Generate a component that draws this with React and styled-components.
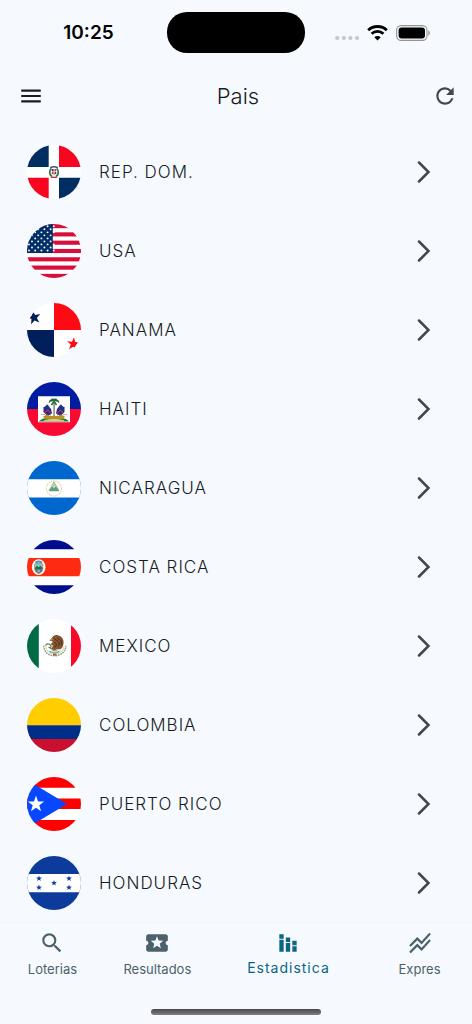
import React from 'react';
import styled, { createGlobalStyle } from 'styled-components';
import {
  MdMenu,
  MdRefresh,
  MdSearch,
  MdLocalActivity,
  MdStackedBarChart,
  MdStackedLineChart
} from 'react-icons/md';

const GlobalStyle = createGlobalStyle`
  * {
    box-sizing: border-box;
  }

  body {
    margin: 0;
    background-color: #f6fafe;
    color: #171c1f;
    font-family: Inter, "Liberation Sans", sans-serif;
  }
`;

const Screen = styled.div`
  display: flex;
  flex-direction: column;
  min-height: 100vh;
`;

const StatusBar = styled.div`
  display: grid;
  grid-template-columns: 1fr 138px 1fr;
  align-items: center;
  height: 65px;
  flex-shrink: 0;
`;

const Clock = styled.time`
  padding-left: 10px;
  text-align: center;
  font-size: 19px;
  font-weight: 600;
  line-height: 24px;
  color: #000;
`;

const Island = styled.div`
  height: 41px;
  border-radius: 20px;
  background-color: #000;
`;

const StatusIcons = styled.div`
  display: flex;
  align-items: center;
  justify-content: center;
  gap: 8px;
  padding-right: 12px;
`;

const AppBar = styled.header`
  display: grid;
  grid-template-columns: 1fr auto 1fr;
  align-items: center;
  height: 61px;
  padding: 0 14px 0 18px;
  flex-shrink: 0;
`;

const IconButton = styled.button`
  display: flex;
  justify-self: ${props => props.$side};
  padding: 0;
  border: none;
  background: none;
  color: ${props => props.$color};
  font-size: 26px;
  cursor: pointer;
`;

const Title = styled.h1`
  margin: 0;
  font-size: 22px;
  font-weight: 300;
  line-height: 32px;
`;

const CountryList = styled.ul`
  flex: 1;
  margin: 0;
  padding: 6px 0 0;
  list-style: none;
`;

const CountryButton = styled.button`
  display: flex;
  align-items: center;
  gap: 18px;
  width: 100%;
  height: 79px;
  padding: 0 41px 0 27px;
  border: none;
  background: none;
  color: inherit;
  font-family: inherit;
  font-size: 17px;
  font-weight: 300;
  letter-spacing: 1px;
  text-align: left;
  cursor: pointer;
`;

const CountryName = styled.span`
  flex: 1;
`;

const Flag = styled.svg`
  width: 54px;
  height: 54px;
  border-radius: 50%;
  flex-shrink: 0;
`;

const BottomNav = styled.nav`
  display: flex;
  padding-top: 7px;
  border-top: 1px solid #f2f6f9;
  flex-shrink: 0;
`;

const NavItem = styled.a`
  display: flex;
  flex-direction: column;
  align-items: center;
  flex: ${props => (props.$active ? 3 : 2)} 1 0;
  min-width: 0;
  color: ${props => (props.$active ? '#0b6583' : '#4c616b')};
  font-size: ${props => (props.$active ? 14 : 13)}px;
  letter-spacing: ${props => (props.$active ? '1px' : 'normal')};
  line-height: ${props => (props.$active ? 24 : 26)}px;
  text-decoration: none;

  svg {
    width: 26px;
    height: 26px;
  }
`;

const HomeArea = styled.div`
  display: flex;
  justify-content: center;
  padding: 27px 0 9px;
`;

const HomeIndicator = styled.div`
  width: 36%;
  height: 6px;
  border-radius: 3px;
  background: linear-gradient(#484848, #808080);
`;

const starPoints = (cx, cy, r, turn = 0) =>
  Array.from({ length: 10 }, (_, i) => {
    const radius = i % 2 ? r * 0.4 : r;
    const angle = ((i * 36 - 90 + turn) * Math.PI) / 180;
    return `${(cx + radius * Math.cos(angle)).toFixed(2)},${(cy + radius * Math.sin(angle)).toFixed(2)}`;
  }).join(' ');

const Dominican = () => (
  <>
    <path fill="#fff" d="M0 0h54v54H0z" />
    <path fill="#002d62" d="M0 0h21.7v22H0zM32 32.7h22V54H32z" />
    <path fill="#f8061f" d="M32 0h22v22H32zM0 32.7h21.7V54H0z" />
    <path d="M24.2 23.2c-2.4 3-1.8 7 .8 8.2" fill="none" stroke="#39764f" strokeWidth="1.8" />
    <path d="M29.8 23.2c2.4 3 1.8 7-.8 8.2" fill="none" stroke="#39764f" strokeWidth="1.8" />
    <path d="M23.2 22.6q3.8-1.6 7.6 0" fill="none" stroke="#35517c" strokeWidth="1.4" />
    <path d="M24 32q3 .8 6 0" fill="none" stroke="#c33443" strokeWidth="1.3" />
    <path d="M24.8 24h4.4v4.5L27 30.8l-2.2-2.3z" fill="#d9b7ac" />
    <path fill="#1c3568" d="M24.8 24h1.6v2h-1.6zM27.8 27.3h1.4v1.6h-1.4z" />
    <path fill="#ce2f3e" d="M27.8 24h1.4v2h-1.4zM24.8 27.3h1.6v1.6h-1.6z" />
  </>
);

const Usa = () => (
  <>
    <path fill="#fff" d="M0 0h54v54H0z" />
    {[0, 2, 4, 6, 8, 10, 12].map(i => (
      <rect key={i} y={i * 4.154} width="54" height="4.154" fill="#d80f3c" />
    ))}
    <path fill="#002f68" d="M0 0h25.8v29H0z" />
    {[0, 1, 2, 3, 4, 5, 6, 7, 8].map(row =>
      [0, 1, 2, 3, 4].map(col => (
        <circle
          key={`${row}-${col}`}
          cx={(row % 2 ? -1.2 : 2) + col * 6.2}
          cy={2.3 + row * 3.02}
          r="0.95"
          fill="#fff"
        />
      ))
    )}
  </>
);

const Panama = () => (
  <>
    <path fill="#fff" d="M0 0h54v54H0z" />
    <path fill="#ff0a12" d="M27 0h27v27H27z" />
    <path fill="#001f5b" d="M0 27h27v27H0z" />
    <polygon points={starPoints(7, 14.6, 7.2, -12)} fill="#001f5b" />
    <polygon points={starPoints(46.4, 41, 6.8, 5)} fill="#ff0a12" />
  </>
);

const Haiti = () => (
  <>
    <path fill="#001ca0" d="M0 0h54v27H0z" />
    <path fill="#f90a33" d="M0 27h54v27H0z" />
    <path fill="#fff" d="M11 14.3h32v26H11z" />
    <path d="M11.5 39.5q4-4 8-3.5h15q4-.5 8 3.5z" fill="#287a3c" />
    <path d="M17 38.3q10-3 20 0v1H17z" fill="#d9c98a" />
    <path d="M14 32.5h4M36 32.5h4" stroke="#e99aa5" strokeWidth="1.2" />
    <path d="M16.5 25l5 9M37.500 25l-5 9M19.500 22.500l4 11M34.500 22.500l-4 11" stroke="#7d6a62" strokeWidth=".7" />
    <path d="M16.5 25.500l4-3 3.500 4.500 1 4.500-4.500 2.500-4-4z" fill="#1e318e" />
    <path d="M37.500 25.500l-4-3-3.500 4.500-1 4.500 4.500 2.500 4-4z" fill="#1e318e" />
    <path d="M18 30.500l3-2.500 3 4M36 30.500l-3-2.500-3 4" fill="none" stroke="#c72f3e" strokeWidth="1.1" />
    <path d="M16 34.500l4-2 3 1.500h8l3-1.500 4 2-2 2.500H18z" fill="#b99021" />
    <path d="M26.400 21h1.300v13h-1.300z" fill="#6c7754" />
    <path
      d="M27 19.500c-2-.5-4 0-5.200 2-.1-2 .4-3.200 1.800-3.700 1-1.400 2.300-1.500 3.400-.8 1.100-.7 2.400-.6 3.400.8 1.400.5 2 1.700 1.800 3.700-1.200-2-3.200-2.500-5.200-2z"
      fill="#226b35"
    />
    <path d="M26.800 19.500L24.500 23M27.200 19.500l2.300 3.500" stroke="#226b35" strokeWidth="1.5" />
  </>
);

const Nicaragua = () => (
  <>
    <path fill="#0067ce" d="M0 0h54v54H0z" />
    <path fill="#fff" d="M0 18.3h54v18.3H0z" />
    <circle cx="27" cy="27.5" r="7.600" fill="none" stroke="#dfd2ab" strokeWidth="1.100" strokeDasharray="1.5 .8" />
    <path d="M27 20.8l5 9H22z" fill="#b6dceb" stroke="#a9a76a" strokeWidth=".8" />
    <path d="M23.500 27.500l1.700-2 1.800 2 1.800-2 1.700 2 .8 1.300h-8.600z" fill="#53a45b" />
    <path d="M22.500 29.300h9" stroke="#3488ad" strokeWidth="1" />
    <circle cx="27" cy="24.500" r=".8" fill="#e6b655" />
  </>
);

const CostaRica = () => (
  <>
    <path fill="#fff" d="M0 0h54v54H0z" />
    <path fill="#000d8c" d="M0 0h54v9.200H0zM0 45.300h54V54H0z" />
    <path fill="#ff2a12" d="M0 18h54v18.300H0z" />
    <ellipse cx="11.700" cy="27.200" rx="6.800" ry="7.900" fill="#fff" />
    <path d="M8 21.800q3.700-2.600 7.400 0l-.5 1.500q-3.200-1.500-6.400 0z" fill="#4190bd" />
    <path d="M7.200 24q4.500-2.500 9 0v4.500c0 3-2 4.500-4.500 5.500-2.500-1-4.500-2.500-4.500-5.500z" fill="#a88d49" />
    <path d="M8 24.500q3.700-1.800 7.400 0v3H8z" fill="#82c4dc" />
    <path d="M8 28l2-2.200 1.700 1.500 1.700-1.500 2 2.200v1.300H8z" fill="#25704b" />
    <path d="M8.200 29.500h7q-.3 2.300-3.500 3.400-3.200-1.100-3.500-3.400z" fill="#327cab" />
    <path d="M10.500 31H13" stroke="#fff" strokeWidth=".8" />
  </>
);

const Mexico = () => (
  <>
    <path fill="#fff" d="M0 0h54v54H0z" />
    <path fill="#006a45" d="M0 0h11.800v54H0z" />
    <path fill="#f90a24" d="M44 0h10v54H44z" />
    <path
      d="M16.800 26.500c.2 6.500 4 10 10.700 10.300 6.700-.3 11-3.800 11.500-10"
      fill="none"
      stroke="#8fa67c"
      strokeWidth="1.4"
      strokeDasharray="1.800 .7"
    />
    <path d="M18.800 27.500c.5 4.700 3.400 7.300 8.700 7.700 5.400-.4 8.800-3 9.500-7.500" fill="none" stroke="#d3c191" strokeWidth=".8" />
    <path
      d="M25 18.500q1.500-3 5-2.400c4.500.7 7 4 6.600 8-.2 2.900-1.200 5.200-3.200 6.200l-3-.2-3.300 1.500-2.600-2.200 1.500-3-2.600-1.200 2.500-2.200-1.500-1.200-2 .2z"
      fill="#85552f"
    />
    <path d="M27 19.500l5.500 4-1 4M30 18.500l4.500 3.500-.3 4M27.500 23l2 2.500-1.500 3" fill="none" stroke="#4c3220" strokeWidth="1" />
    <path d="M24 20.500l2-.8" stroke="#d0a44d" strokeWidth="1.2" />
    <path d="M18.500 26.500q2-3 4.500-.8t-.5 3l3.500 1.800" fill="none" stroke="#577f58" strokeWidth="1.2" />
    <path d="M21.500 31.500q6 3 12-.2l-2 2.500h-8z" fill="#48a6a9" />
    <path d="M26 34.500h3.500v2H26z" fill="#b84d42" />
    <path d="M24.500 30.500l3 1.500 4-1.700" fill="none" stroke="#b98a43" strokeWidth="1" />
  </>
);

const Colombia = () => (
  <>
    <path fill="#ffcd00" d="M0 0h54v27.300H0z" />
    <path fill="#002d87" d="M0 27.300h54V41H0z" />
    <path fill="#c9102f" d="M0 41h54v13H0z" />
  </>
);

const PuertoRico = () => (
  <>
    <path fill="#fff" d="M0 0h54v54H0z" />
    <path fill="#ff0000" d="M0 0h54v10.700H0zM0 21.400h54V32H0zM0 43h54v11H0z" />
    <path fill="#0647ff" d="M0 2.900L40 27 0 51.100z" />
    <polygon points={starPoints(9, 27.2, 8.6)} fill="#fff" />
  </>
);

const Honduras = () => (
  <>
    <path fill="#0c3b9b" d="M0 0h54v54H0z" />
    <path fill="#fff" d="M0 18h54v18.200H0z" />
    {[[12, 22.5], [42, 22.5], [27, 27.1], [12, 31.6], [42, 31.6]].map(([x, y]) => (
      <polygon key={`${x}-${y}`} points={starPoints(x, y, 3.1)} fill="#0c3b9b" />
    ))}
  </>
);

const countries = [
  { name: 'REP. DOM.', Artwork: Dominican },
  { name: 'USA', Artwork: Usa },
  { name: 'PANAMA', Artwork: Panama },
  { name: 'HAITI', Artwork: Haiti },
  { name: 'NICARAGUA', Artwork: Nicaragua },
  { name: 'COSTA RICA', Artwork: CostaRica },
  { name: 'MEXICO', Artwork: Mexico },
  { name: 'COLOMBIA', Artwork: Colombia },
  { name: 'PUERTO RICO', Artwork: PuertoRico },
  { name: 'HONDURAS', Artwork: Honduras }
];

const tabs = [
  { label: 'Loterias', Icon: MdSearch },
  { label: 'Resultados', Icon: MdLocalActivity },
  { label: 'Estadistica', Icon: MdStackedBarChart, active: true },
  { label: 'Expres', Icon: MdStackedLineChart }
];

const Chevron = () => (
  <svg width="14" height="22" viewBox="0 0 14 22" aria-hidden="true">
    <path d="M2 1.5L11.5 11 2 20.5" fill="none" stroke="#40484c" strokeWidth="2.5" strokeLinecap="round" />
  </svg>
);

const SignalDots = () => (
  <svg width="24" height="16" viewBox="0 0 24 16" aria-hidden="true">
    {[2.2, 8.8, 15.4, 22].map(x => (
      <circle key={x} cx={x} cy="13" r="2.1" fill="#c5c8cb" />
    ))}
  </svg>
);

const Wifi = () => (
  <svg width="21" height="16" viewBox="0 0 21 16" aria-hidden="true">
    <path d="M1.200 5.200a13.500 13.500 0 0 1 18.600 0" fill="none" stroke="#000" strokeWidth="2.900" />
    <path d="M4.600 8.700a8.600 8.600 0 0 1 11.800 0" fill="none" stroke="#000" strokeWidth="2.800" />
    <path d="M10.500 15.500l-3.200-3.300a4.600 4.600 0 0 1 6.400 0z" fill="#000" />
  </svg>
);

const Battery = () => (
  <svg width="34" height="16" viewBox="0 0 34 16" aria-hidden="true">
    <rect x=".6" y=".6" width="30.4" height="14.8" rx="4.6" fill="none" stroke="#929496" strokeWidth="1.1" />
    <rect x="2.600" y="2.5" width="26.4" height="11" rx="3" fill="#000" />
    <path d="M32.3 5.300c2 .8 2 4.600 0 5.400z" fill="#929496" />
  </svg>
);

const App = () => {
  const renderCountries = countries.map(({ name, Artwork }) => (
    <li key={name}>
      <CountryButton type="button">
        <Flag viewBox="0 0 54 54" aria-hidden="true">
          <Artwork />
        </Flag>
        <CountryName>{name}</CountryName>
        <Chevron />
      </CountryButton>
    </li>
  ));

  const renderTabs = tabs.map(({ label, Icon, active }) => (
    <NavItem key={label} href={`#${label.toLowerCase()}`} $active={active} aria-current={active ? 'page' : undefined}>
      <Icon />
      {label}
    </NavItem>
  ));

  return (
    <Screen>
      <GlobalStyle />
      <StatusBar>
        <Clock>10:25</Clock>
        <Island />
        <StatusIcons>
          <SignalDots />
          <Wifi />
          <Battery />
        </StatusIcons>
      </StatusBar>
      <AppBar>
        <IconButton type="button" aria-label="Menu" $side="start" $color="#171c1f">
          <MdMenu />
        </IconButton>
        <Title>Pais</Title>
        <IconButton type="button" aria-label="Actualizar" $side="end" $color="#40484c">
          <MdRefresh />
        </IconButton>
      </AppBar>
      <CountryList>{renderCountries}</CountryList>
      <BottomNav>{renderTabs}</BottomNav>
      <HomeArea>
        <HomeIndicator />
      </HomeArea>
    </Screen>
  );
};

export default App;
